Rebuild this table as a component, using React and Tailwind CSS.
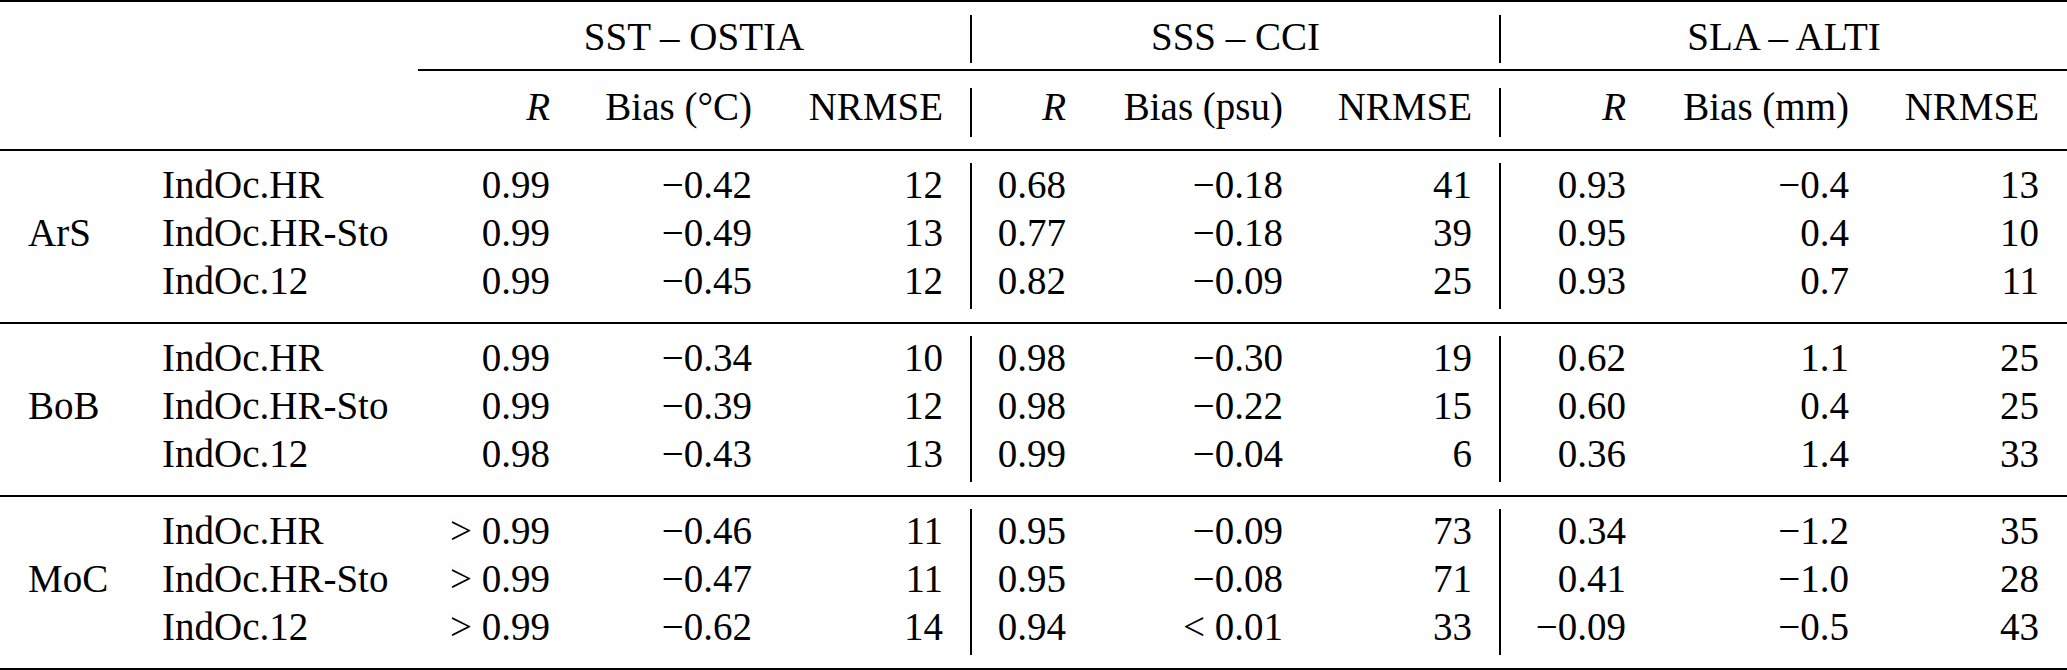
import React from "react";

const GROUPS = [
  {
    title: "SST – OSTIA",
    unit: "Bias (°C)",
    width: "w-[552px]",
    cols: ["w-[160px] pr-[28px]", "w-[202px] pr-[28px]", "w-[190px] pr-[27px]"],
  },
  {
    title: "SSS – CCI",
    unit: "Bias (psu)",
    width: "w-[527px]",
    cols: ["w-[122px] pr-[28px]", "w-[217px] pr-[28px]", "w-[188px] pr-[27px]"],
  },
  {
    title: "SLA – ALTI",
    unit: "Bias (mm)",
    width: "w-[566px]",
    cols: ["w-[153px] pr-[28px]", "w-[223px] pr-[28px]", "w-[190px] pr-[28px]"],
  },
];

const EXPERIMENTS = ["IndOc.HR", "IndOc.HR-Sto", "IndOc.12"];

// one block per region, rows follow EXPERIMENTS, 9 values per row (3 per group)
const REGIONS = [
  {
    name: "ArS",
    rows: [
      ["0.99", "−0.42", "12", "0.68", "−0.18", "41", "0.93", "−0.4", "13"],
      ["0.99", "−0.49", "13", "0.77", "−0.18", "39", "0.95", "0.4", "10"],
      ["0.99", "−0.45", "12", "0.82", "−0.09", "25", "0.93", "0.7", "11"],
    ],
  },
  {
    name: "BoB",
    rows: [
      ["0.99", "−0.34", "10", "0.98", "−0.30", "19", "0.62", "1.1", "25"],
      ["0.99", "−0.39", "12", "0.98", "−0.22", "15", "0.60", "0.4", "25"],
      ["0.98", "−0.43", "13", "0.99", "−0.04", "6", "0.36", "1.4", "33"],
    ],
  },
  {
    name: "MoC",
    rows: [
      ["> 0.99", "−0.46", "11", "0.95", "−0.09", "73", "0.34", "−1.2", "35"],
      ["> 0.99", "−0.47", "11", "0.95", "−0.08", "71", "0.41", "−1.0", "28"],
      ["> 0.99", "−0.62", "14", "0.94", "< 0.01", "33", "−0.09", "−0.5", "43"],
    ],
  },
];

const Rule = () => <div className="h-[2px] bg-black" />;

const Divider = ({ className }) => (
  <div className={"w-[2px] shrink-0 bg-black " + className} />
);

// lays out the three metric groups with the vertical rules between them
const Section = ({ left, render, divider, className }) => (
  <div className={"flex " + className}>
    <div className="w-[418px] shrink-0 flex">{left}</div>
    <div className={GROUPS[0].width + " shrink-0"}>{render(GROUPS[0], 0)}</div>
    <Divider className={divider} />
    <div className={GROUPS[1].width + " shrink-0"}>{render(GROUPS[1], 1)}</div>
    <Divider className={divider} />
    <div className={GROUPS[2].width + " shrink-0"}>{render(GROUPS[2], 2)}</div>
  </div>
);

const App = () => {
  return (
    <div className="w-[2067px] h-[670px] bg-white text-black font-['Liberation_Serif',serif] text-[39px] leading-[48px] whitespace-nowrap">
      <Rule />

      {/* group titles */}
      <Section
        divider="mt-[13px] mb-[6px]"
        left={null}
        render={(g) => (
          <div className="pt-[11px] pb-[8px] text-center">{g.title}</div>
        )}
      />

      <div className="flex">
        <div className="w-[418px] shrink-0" />
        <div className="h-[2px] flex-1 bg-black" />
      </div>

      {/* metric names */}
      <Section
        divider="mt-[17px] mb-[12px]"
        left={null}
        render={(g) => (
          <div className="flex pt-[12px] pb-[18px]">
            <div className={g.cols[0] + " text-right italic"}>R</div>
            <div className={g.cols[1] + " text-right"}>{g.unit}</div>
            <div className={g.cols[2] + " text-right"}>NRMSE</div>
          </div>
        )}
      />
      <Rule />

      {REGIONS.map((region) => (
        <div key={region.name}>
          <Section
            divider="mt-[12px] mb-[13px]"
            left={
              <>
                <div className="w-[162px] pl-[28px] pt-[10px]">
                  <div>&nbsp;</div>
                  <div>{region.name}</div>
                </div>
                <div className="pt-[10px]">
                  {EXPERIMENTS.map((e) => (
                    <div key={e}>{e}</div>
                  ))}
                </div>
              </>
            }
            render={(g, gi) => (
              <div className="pt-[10px] pb-[17px]">
                {region.rows.map((row, ri) => (
                  <div key={ri} className="flex">
                    {g.cols.map((c, ci) => (
                      <div key={ci} className={c + " text-right"}>
                        {row[gi * 3 + ci]}
                      </div>
                    ))}
                  </div>
                ))}
              </div>
            )}
          />
          <Rule />
        </div>
      ))}
    </div>
  );
};

export default App;
